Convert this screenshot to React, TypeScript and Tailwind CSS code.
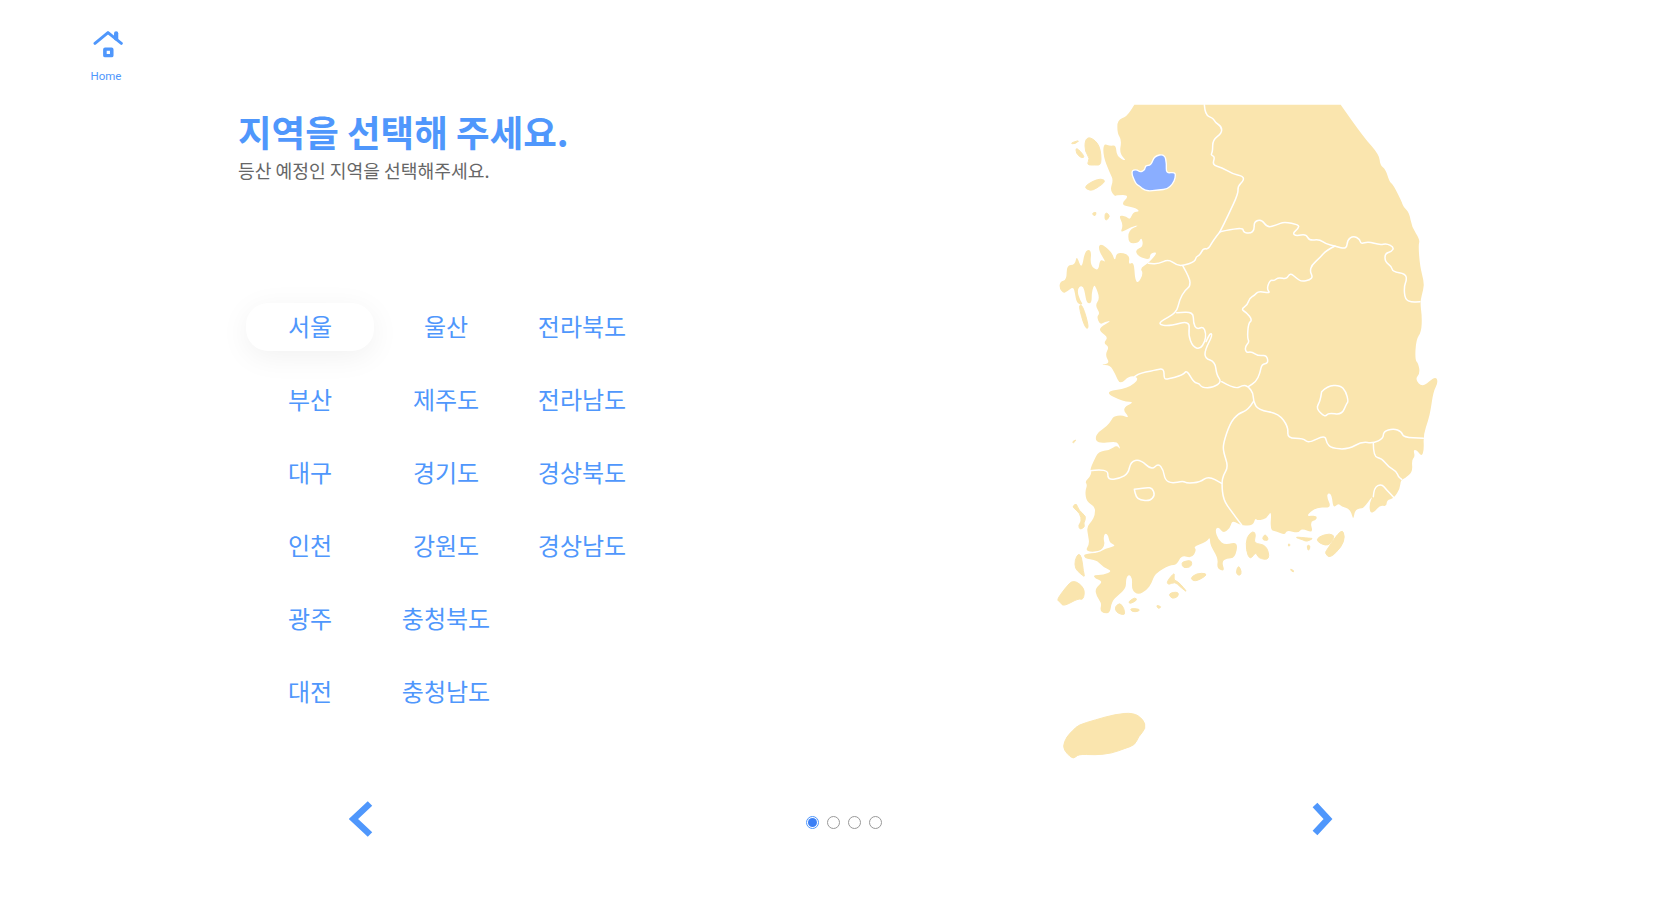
const regions = [
  ["서울", "울산", "전라북도"],
  ["부산", "제주도", "전라남도"],
  ["대구", "경기도", "경상북도"],
  ["인천", "강원도", "경상남도"],
  ["광주", "충청북도", ""],
  ["대전", "충청남도", ""],
];

// map points were traced from crops, the lower crop sits 930 units further down
const lo = (s: string) =>
  s
    .trim()
    .split(/\s+/)
    .map((p) => {
      const [x, y] = p.split(",").map(Number);
      return `${x},${y + 930}`;
    })
    .join(" ");

// rounds the traced outline: curve through the midpoints, a doubled point stays a sharp corner
const toPath = (s: string, close = true) => {
  const pts = s
    .trim()
    .split(/\s+/)
    .map((p) => p.split(",").map(Number));
  const mid = (a: number[], b: number[]) => `${(a[0] + b[0]) / 2},${(a[1] + b[1]) / 2}`;
  if (!close) {
    let d = `M${pts[0].join(",")}`;
    for (let i = 1; i < pts.length - 1; i++) d += ` Q${pts[i].join(",")} ${mid(pts[i], pts[i + 1])}`;
    return d + ` L${pts[pts.length - 1].join(",")}`;
  }
  let d = `M${mid(pts[pts.length - 1], pts[0])}`;
  pts.forEach((p, i) => {
    d += ` Q${p.join(",")} ${mid(p, pts[(i + 1) % pts.length])}`;
  });
  return d + " Z";
};

const mainland =
  `283,44 283,44 902,44 902,44 970,140 1018,195 1020,225 1037,238 1048,275 1060,285 1085,335 1090,350 1108,368 1115,410 1140,450 1135,465 1140,530 1152,575 1150,600 1140,635 1146,680 1144,725 1128,750 1125,810 1135,820 1140,850 1125,868 1148,893 1185,858 1195,875 1180,905 1172,960 ` +
  lo(`1165,60 1150,105 1152,150 1145,170 1130,150 1120,150 1125,170 1115,180 1118,215 1095,235 1082,240 1080,265 1062,295 1040,300 1040,320 1020,315 1005,335 990,340 988,310 1000,285 970,325 960,325 945,330 940,360 935,340 925,325 905,320 895,310 880,325 875,285 865,278 860,290 875,325 830,320 795,350 830,345 830,360 810,365 820,400 785,385 775,400 740,390 735,405 710,395 690,390 695,330 680,355 660,360 652,360 645,355 640,375 605,378 585,365 575,365 570,385 550,400 535,380 525,390 535,420 555,435 595,425 585,475 560,475 545,485 555,515 530,505 535,475 510,435 510,410 500,425 460,440 470,450 455,475 425,465 410,495 390,495 345,520 335,550 320,570 295,585 275,570 277,535 267,523 258,535 258,565 235,585 215,605 210,640 190,640 180,630 185,610 170,590 165,565 190,545 165,535 160,525 190,525 218,513 190,502 172,482 150,478 135,475 130,462 178,458 195,445 230,438 208,428 206,408 195,398 190,415 195,435 180,455 135,455 148,432 145,410 140,380 155,365 165,345 165,320 140,305 135,275 142,255 135,245 150,230 155,215 150,210 160,185 175,155 210,150 230,135 242,150 235,130 225,125 175,130 165,115 175,95 200,80 215,60 220,50 245,45 270,55 245,25 285,5`) +
  ` 250,935 190,905 265,895 300,865 270,855 240,885 225,850 210,825 180,825 210,820 195,795 208,770 190,760 205,742 180,725 180,712 215,692 195,695 180,705 170,680 180,670 165,645 180,625 165,585 160,590 155,610 155,640 140,640 135,610 130,590 118,588 112,605 120,630 130,645 110,640 105,610 100,590 80,605 70,610 58,595 60,575 80,570 80,525 105,525 110,495 125,540 135,480 155,480 150,525 175,545 180,505 200,520 175,480 180,458 215,485 225,515 230,485 270,495 265,525 282,515 285,570 295,580 310,550 300,535 325,520 355,485 330,490 330,510 295,500 285,480 310,470 305,440 295,460 265,460 265,420 300,405 275,410 240,430 250,405 235,375 260,380 270,390 280,365 300,365 285,352 240,345 270,315 228,315 225,320 210,300 220,270 210,250 190,200 190,160 210,168 228,165 230,200 262,215 238,190 245,150 232,130 232,90 260,80`;

const islands = [
  "135,150 150,140 180,165 185,225 165,225 140,225 150,205 135,185",
  "130,290 175,265 200,272 170,295 150,303",
  "155,370 170,365 165,380",
  "195,365 212,378 195,395",
  "108,170 135,200 125,205 108,190",
  "90,160 120,150 105,162",
  "115,645 135,715 148,715 128,645",
  lo("68,1040 80,1010 100,990 115,975 165,960 225,943 280,938 310,958 318,985 295,1010 285,1035 255,1045 215,1060 165,1065 115,1062 100,1078 80,1060"),
  lo("50,600 75,565 100,538 135,565 130,600 115,595 70,620 60,605"),
  lo("115,460 105,480 105,505 120,520 135,532 130,515 125,470"),
  lo("98,318 110,310 115,330 140,350 130,370 135,380 120,390 115,375 125,365 120,340 102,325"),
  lo("225,620 240,608 252,625 255,645 240,642 228,635"),
  lo("265,605 285,592 292,600 270,612"),
  lo("270,625 300,627 295,635 275,635"),
  lo("348,615 365,620 355,627"),
  lo("385,580 415,575 415,590 395,597"),
  lo("380,545 405,515 400,540 415,545 445,580 420,560 405,545 385,555"),
  lo("450,535 470,520 500,520 495,530 465,545"),
  lo("430,485 455,480 455,500 430,505 425,490"),
  lo("595,495 605,515 600,528 587,520"),
  lo("620,410 640,392 648,405 640,430 680,435 690,480 655,475 648,455 630,480 618,450"),
  lo("665,420 675,400 688,422"),
  lo("835,410 870,400 885,410 865,440 830,425"),
  lo("860,450 905,385 915,410 905,440 870,475 855,460"),
  lo("760,410 810,415 820,415 800,425 790,420"),
  lo("800,435 812,437 805,455"),
  lo("745,430 752,435 745,440"),
  lo("750,505 765,515 755,515"),
  lo("97,125 110,118 100,130"),
];

const borders = [
  "493,44 495,75 520,85 525,97 545,110 545,130 518,150 518,185 512,195 525,200 517,225 545,232 578,252 608,258 612,270 593,290 595,310 565,375 540,425",
  "540,425 520,450 505,478 490,475 480,495 468,500 465,515 428,527 410,525 385,508 355,522 325,520",
  "540,425 608,410 610,428 632,430 643,420 642,395 665,388 682,413 710,405 732,395 777,405 775,415 758,430 768,438 798,432 808,452 838,448 858,462 885,468 920,478 922,450 940,437 960,448 962,462 985,455 1020,465 1040,460 1062,472 1055,485 1035,490 1035,515 1055,530 1058,545 1097,552 1100,570 1092,590 1095,628 1115,637 1140,635",
  "885,468 860,480 840,503 815,525 810,545 818,560 810,570 785,575 770,565 750,548 740,568 715,562 703,572 690,570 680,597 692,610 655,603 645,615 628,625 622,645 603,658 620,668 637,690 625,700 622,745 628,755 615,770 618,788 635,785 655,798 680,795 685,820 665,822 660,850 648,875 625,890",
  "428,527 450,565 450,590 435,600 418,630 410,668 360,695 360,705 390,708 450,692 445,735 458,770 480,778 495,755 498,730 490,710 470,718 460,700 460,665 410,668",
  "498,755 510,728 518,735 495,780 495,805 525,815 530,855 545,875 520,893 485,893 478,880 462,878 440,840 430,855 380,868 372,865 372,835 345,840 290,852 270,875 240,885",
  "545,875 585,898 610,885 625,890 640,910 " +
    lo("640,5 655,30 715,40 745,80 742,115 790,115 805,130 855,105 860,130 875,145 925,148 965,125 1000,130 1030,115 1030,95 1060,85 1085,95 1090,112 1150,115"),
  lo("1000,130 1000,170 1025,175 1045,200 1070,215 1075,230 1085,238"),
  lo("1000,290 1002,262 1025,252 1040,270 1062,293"),
  lo("640,5 625,30 595,40 570,70 550,130 550,155 565,200 550,225 545,250 550,300 575,335 605,375"),
  lo("150,212 205,205 202,240 240,235 265,220 272,185 300,178 335,210 355,190 370,210 375,240 395,250 430,243 440,250 480,247 505,228 545,250"),
  lo("283,268 320,262 337,265 345,285 330,303 300,300 288,290 283,268"),
  "845,905 862,888 900,885 918,905 925,935 " +
    lo("920,10 905,45 865,38 855,52 828,25 840,5") +
    " 845,905",
];

const seoul =
  "272,243 290,238 300,247 315,240 316,226 333,226 343,198 374,192 380,222 378,250 406,246 406,264 398,282 382,297 358,300 316,304 298,287 287,282";

function KoreaMap() {
  return (
    <svg viewBox="0 0 1260 2070" width={420} height={690} className="shrink-0">
      <path d={toPath(mainland)} fill="#fae5ae" />
      {islands.map((s, i) => (
        <path key={i} d={toPath(s)} fill="#fae5ae" stroke="#fae5ae" strokeWidth={3} strokeLinejoin="round" />
      ))}
      {borders.map((s, i) => (
        <path key={i} d={toPath(s, false)} fill="none" stroke="#ffffff" strokeWidth={4.5} strokeLinejoin="round" strokeLinecap="round" />
      ))}
      <path d={toPath(seoul)} fill="#8aaeff" stroke="#ffffff" strokeWidth={4} strokeLinejoin="round" />
    </svg>
  );
}

function HomeLink() {
  return (
    <div className="ml-[90px] flex w-[32px] flex-col items-center pt-[30px]">
      <svg viewBox="100 58 90 86" width={30} height={28} className="ml-[4px]">
        <path d="M105 99 L145 66 L186 99" fill="none" stroke="#4f97fc" strokeWidth={9} strokeLinecap="round" strokeLinejoin="round" />
        <path d="M170 84 V68" fill="none" stroke="#4f97fc" strokeWidth={13} strokeLinecap="round" />
        <path fillRule="evenodd" d="M136 112 H156 Q162 112 162 118 V136 Q162 142 156 142 H136 Q130 142 130 136 V118 Q130 112 136 112 Z M141 122 V132 H151 V122 Z" fill="#4f97fc" />
      </svg>
      <span className="mt-[11px] font-['Roboto',sans-serif] text-[11.5px] leading-[14px] text-[#4f97fc]">Home</span>
    </div>
  );
}

export default function App() {
  return (
    <div className="h-[908px] w-full overflow-hidden bg-white font-['Noto_Sans_CJK_KR',sans-serif]">
      <div className="flex h-[790px]">
        <div className="w-[1040px] shrink-0">
          <HomeLink />
          <div className="ml-[238px] mt-[27px]">
            <h1 className="text-[36.5px] leading-[44px] font-bold text-[#4f97fc]">지역을 선택해 주세요.</h1>
            <p className="mt-[3px] text-[18.2px] leading-[26px] text-[#666666]">등산 예정인 지역을 선택해주세요.</p>
          </div>
          <div className="ml-[246px] mt-[120px] grid w-[400px] grid-cols-[128px_144px_128px] auto-rows-[73px]">
            {regions.flat().map((name, i) => (
              <div key={i} className="flex h-[48px] items-center justify-center">
                {name && (
                  <span
                    className={
                      i === 0
                        ? "flex h-[48px] w-[128px] items-center justify-center rounded-[22px] bg-white pb-[2px] text-2xl text-[#4f97fc] shadow-[0_6px_30px_rgba(0,0,0,0.06)]"
                        : "mb-[2px] text-2xl whitespace-nowrap text-[#4f97fc]"
                    }
                  >
                    {name}
                  </span>
                )}
              </div>
            ))}
          </div>
        </div>
        <div className="pt-[90px]">
          <KoreaMap />
        </div>
      </div>
      <div className="mt-[11px] flex items-start justify-between pl-[349px] pr-[347px]">
        <svg viewBox="0 0 24 36" width={24} height={36}>
          <path d="M21 2.5 L4.5 18 L21 33.5" fill="none" stroke="#4f97fc" strokeWidth={6.5} />
        </svg>
        <div className="ml-[3px] mt-[15px] flex gap-[8px]">
          <span className="flex h-[13px] w-[13px] items-center justify-center rounded-full border border-[#4f97fc]">
            <span className="h-[9px] w-[9px] rounded-full bg-[#3b7ff5]" />
          </span>
          <span className="h-[13px] w-[13px] rounded-full border-[1.5px] border-[#999999]" />
          <span className="h-[13px] w-[13px] rounded-full border-[1.5px] border-[#999999]" />
          <span className="h-[13px] w-[13px] rounded-full border-[1.5px] border-[#999999]" />
        </div>
        <svg viewBox="0 0 21 34" width={21} height={34} className="mt-[1px]">
          <path d="M3 3 L16 17 L3 31" fill="none" stroke="#4f97fc" strokeWidth={6.5} />
        </svg>
      </div>
    </div>
  );
}
